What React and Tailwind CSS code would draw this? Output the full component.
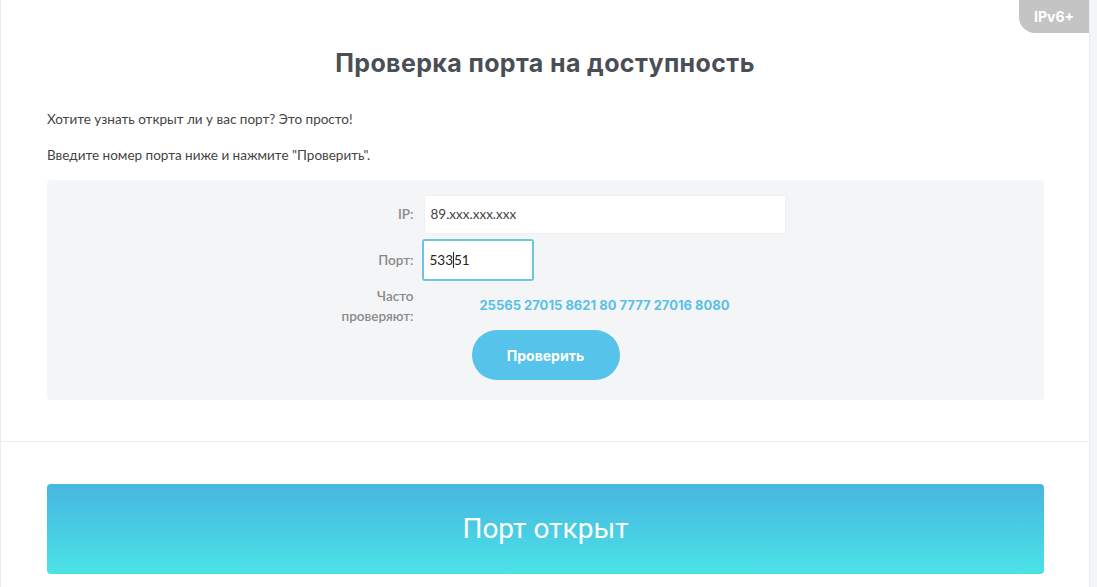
import React from 'react';

export default function App() {
  const ports = ['25565', '27015', '8621', '80', '7777', '27016', '8080'];
  const head = { fontFamily: 'Inter, "Open Sans", sans-serif' };
  const body = { fontFamily: 'Lato, "Open Sans", sans-serif' };
  return (
    <div className="flex min-h-[587px] bg-[#f4f5f7]" style={body}>
      <div className="relative w-[1090px] bg-white border-l border-[#ececec] border-r border-r-[#ececec] pt-[47px]">
        <div className="absolute top-0 right-0 w-[70px] h-[33px] bg-[#c4c4c4] rounded-bl-[16px] flex items-center justify-center text-white text-[14px] font-bold" style={head}>
          IPv6+
        </div>
        <h1 className="text-center text-[25px] leading-[32px] font-bold tracking-[0.015em] text-[#4a4f55]" style={head}>
          Проверка порта на доступность
        </h1>
        <div className="px-[46px] text-[13.5px] leading-[18px] text-[#444]">
          <p className="mt-[31px]">Хотите узнать открыт ли у вас порт? Это просто!</p>
          <p className="mt-[18px]">Введите номер порта ниже и нажмите "Проверить".</p>
        </div>
        <div className="ml-[46px] mr-[45px] mt-[16px] bg-[#f4f5f7] rounded-[4px] pt-[15px] pb-[20px]">
          <div className="mx-auto w-[480px] grid grid-cols-[108px_362px] gap-x-[10px] gap-y-[5px] items-center">
            <div className="text-right text-[13.5px] font-semibold text-[#8a8a8a]">IP:</div>
            <div className="h-[39px] bg-white border border-[#f0f0f0] flex items-center px-[6px] text-[13.5px] text-[#444]">
              89.xxx.xxx.xxx
            </div>
            <div className="text-right text-[13.5px] font-semibold text-[#8a8a8a]">Порт:</div>
            <div className="-ml-[2px] w-[112px] h-[42px] bg-white border-2 border-[#6fc3dc] rounded-[3px] flex items-center px-[6px] text-[13.5px] text-[#222]">
              533<span className="inline-block w-px h-[16px] bg-[#222]"></span>51
            </div>
            <div className="text-right text-[13.5px] leading-[20px] text-[#8a8a8a] font-semibold">
              Часто<br />проверяют:
            </div>
            <div className="text-center text-[13px] font-bold text-[#5bc0e6]" style={head}>
              {ports.map((p, i) => (
                <span key={p}>{i > 0 ? ' ' : ''}{p}</span>
              ))}
            </div>
          </div>
          <div className="flex justify-center mt-[4px]">
            <button className="w-[148px] h-[50px] rounded-full bg-[#56c3ea] text-white text-[14px] font-bold" style={head}>
              Проверить
            </button>
          </div>
        </div>
        <div className="mt-[41px] border-t border-[#ececec]"></div>
        <div className="ml-[46px] mr-[45px] mt-[42px] h-[90px] rounded-[4px] bg-gradient-to-b from-[#47b6e0] to-[#4be2e6] flex items-center justify-center">
          <span className="text-white text-[28px]" style={{ fontFamily: 'Roboto, sans-serif' }}>Порт открыт</span>
        </div>
      </div>
      <div className="flex-1"></div>
    </div>
  );
}
